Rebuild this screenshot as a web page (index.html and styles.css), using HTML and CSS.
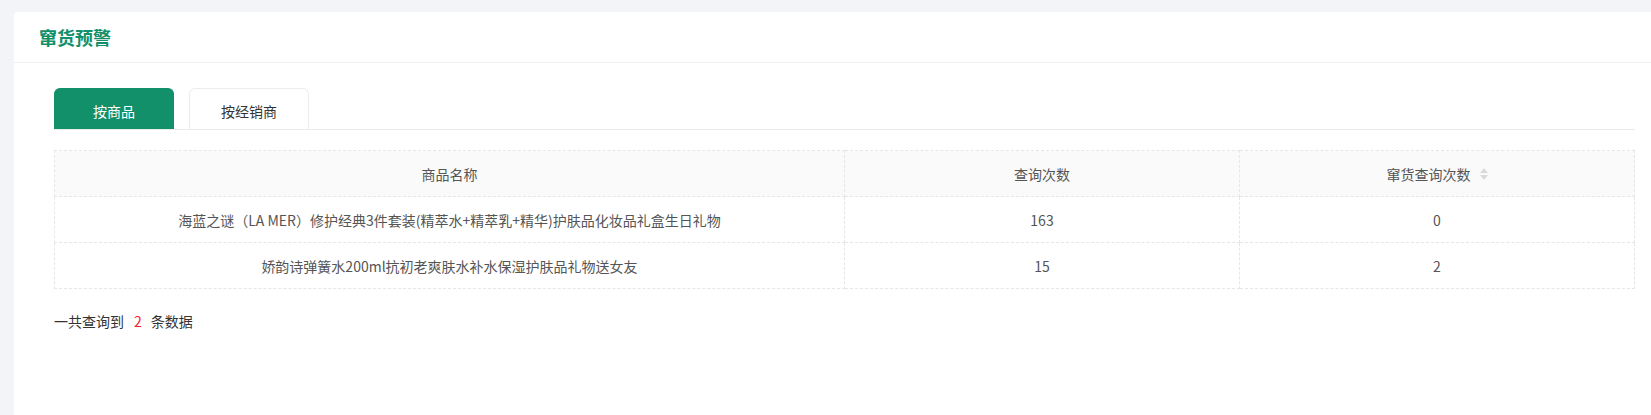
FILE: index.html
```html
<!DOCTYPE html>
<html lang="zh-CN">
<head>
<meta charset="utf-8">
<title>窜货预警</title>
<link rel="stylesheet" href="styles.css">
</head>
<body>
<div class="page">
  <div class="card">
    <div class="card-header"><h2 class="title">窜货预警</h2></div>
    <div class="card-body">
      <div class="tabs">
        <div class="tab active">按商品</div>
        <div class="tab">按经销商</div>
      </div>
      <table class="grid">
        <colgroup><col class="c1"><col class="c2"><col class="c3"></colgroup>
        <thead>
          <tr>
            <th>商品名称</th>
            <th>查询次数</th>
            <th><span class="th-sort">窜货查询次数<span class="sorter"><span class="up"></span><span class="down"></span></span></span></th>
          </tr>
        </thead>
        <tbody>
          <tr>
            <td>海蓝之谜（LA MER）修护经典3件套装(精萃水+精萃乳+精华)护肤品化妆品礼盒生日礼物</td>
            <td>163</td>
            <td>0</td>
          </tr>
          <tr>
            <td>娇韵诗弹簧水200ml抗初老爽肤水补水保湿护肤品礼物送女友</td>
            <td>15</td>
            <td>2</td>
          </tr>
        </tbody>
      </table>
      <div class="summary">一共查询到<span class="count">2</span>条数据</div>
    </div>
  </div>
</div>
</body>
</html>
```

FILE: styles.css
```css
html, body {
  margin: 0;
  padding: 0;
  height: 100%;
}
body {
  background: #f3f4f8;
  font-family: "Noto Sans CJK SC", "Open Sans", sans-serif;
  font-size: 14px;
  color: #333;
  overflow: hidden;
}
.page {
  padding: 12px 0 0 14px;
  height: 100%;
  box-sizing: border-box;
}
.card {
  background: #fff;
  border-radius: 4px 0 0 0;
  height: 100%;
}
.card-header {
  height: 50px;
  border-bottom: 1px solid #f0f0f0;
  padding-left: 25px;
  display: flex;
  align-items: center;
}
.title {
  margin: 0;
  font-size: 18px;
  font-weight: 700;
  color: #12906a;
  line-height: 1;
}
.card-body {
  padding: 25px 16px 0 40px;
}
.tabs {
  display: flex;
  gap: 15px;
  border-bottom: 1px solid #ebebeb;
  height: 41px;
}
.tab {
  width: 120px;
  height: 41px;
  box-sizing: border-box;
  border: 1px solid #ececec;
  border-bottom: none;
  border-radius: 6px 6px 0 0;
  display: flex;
  align-items: center;
  justify-content: center;
  padding-top: 3px;
  font-size: 14px;
  color: #333;
  background: #fff;
}
.tab.active {
  background: #12906a;
  border-color: #12906a;
  color: #fff;
}
.grid {
  margin-top: 20px;
  width: 100%;
  border-collapse: collapse;
  table-layout: fixed;
}
.c1 { width: 50%; }
.c2 { width: 25%; }
.c3 { width: 25%; }
.grid th, .grid td {
  border: 1px dashed #e6e6e6;
  height: 45px;
  padding: 0 10px;
  text-align: center;
  font-size: 14px;
  font-weight: 400;
  color: #555;
}
.grid th {
  background: #fafafa;
}
.th-sort {
  display: inline-flex;
  align-items: center;
}
.sorter {
  display: inline-flex;
  flex-direction: column;
  gap: 2px;
  margin-left: 9px;
}
.sorter .up {
  width: 0; height: 0;
  border-left: 4px solid transparent;
  border-right: 4px solid transparent;
  border-bottom: 5px solid #dadada;
}
.sorter .down {
  width: 0; height: 0;
  border-left: 4px solid transparent;
  border-right: 4px solid transparent;
  border-top: 5px solid #dadada;
}
.summary {
  margin-top: 22px;
  font-size: 14px;
  line-height: 20px;
  color: #333;
}
.count {
  color: #f5222d;
  margin: 0 9px 0 10px;
}
```
